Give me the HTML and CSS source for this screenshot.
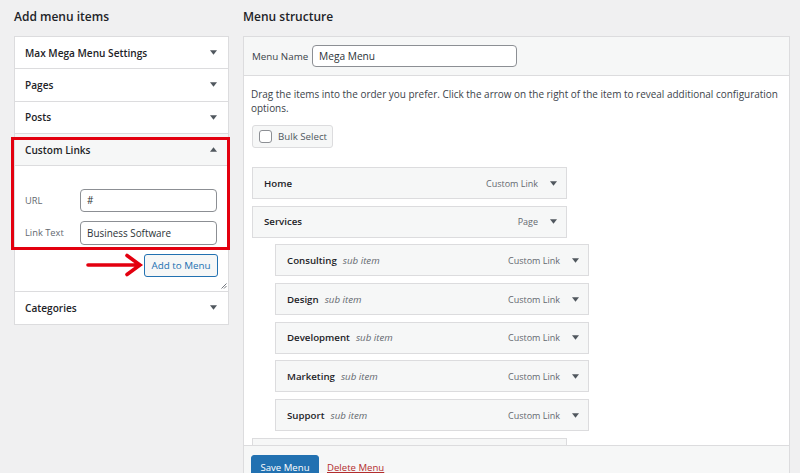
FILE: index.html
```html
<!DOCTYPE html>
<html lang="en">
<head>
<meta charset="utf-8">
<title>Menus</title>
<link rel="stylesheet" href="styles.css">
</head>
<body>
<div class="page">
  <div class="col-left">
    <h2 class="col-title">Add menu items</h2>
    <div class="accordion">
      <div class="acc-head"><span>Max Mega Menu Settings</span><svg class="tri" viewBox="0 0 8 5"><path d="M0 0H8L4 5Z"/></svg></div>
      <div class="acc-head"><span>Pages</span><svg class="tri" viewBox="0 0 8 5"><path d="M0 0H8L4 5Z"/></svg></div>
      <div class="acc-head"><span>Posts</span><svg class="tri" viewBox="0 0 8 5"><path d="M0 0H8L4 5Z"/></svg></div>
      <div class="acc-head open"><span>Custom Links</span><svg class="tri" viewBox="0 0 8 5"><path d="M0 5H8L4 0Z"/></svg></div>
      <div class="custom-body">
        <div class="field"><label class="field-label">URL</label><div class="input">#</div></div>
        <div class="field"><label class="field-label">Link Text</label><div class="input">Business Software</div></div>
        <div class="btn-row"><span class="btn-secondary">Add to Menu</span></div>
        <svg class="grip" viewBox="0 0 6 6"><path d="M5.5 0.5L0.5 5.5M5.5 3L3 5.5"/></svg>
      </div>
      <div class="acc-head last"><span>Categories</span><svg class="tri" viewBox="0 0 8 5"><path d="M0 0H8L4 5Z"/></svg></div>
    </div>
    <div class="highlight"></div>
    <svg class="red-arrow" viewBox="0 0 58 24"><path d="M2 12H54M41 2.5L54 12L41 21.5"/></svg>
  </div>

  <div class="col-right">
    <h2 class="col-title">Menu structure</h2>
    <div class="menu-panel">
      <div class="menu-header">
        <label class="menu-name-label">Menu Name</label>
        <div class="input menu-name">Mega Menu</div>
      </div>
      <div class="menu-body">
        <p class="desc">Drag the items into the order you prefer. Click the arrow on the right of the item to reveal additional configuration options.</p>
        <div class="bulk"><span class="checkbox"></span><span>Bulk Select</span></div>
        <div class="menu-list">
          <div class="item"><span class="item-title">Home</span><span class="item-type">Custom Link</span><svg class="tri" viewBox="0 0 8 5"><path d="M0 0H8L4 5Z"/></svg></div>
          <div class="item"><span class="item-title">Services</span><span class="item-type">Page</span><svg class="tri" viewBox="0 0 8 5"><path d="M0 0H8L4 5Z"/></svg></div>
          <div class="item sub"><span class="item-title">Consulting</span><span class="sub-note">sub item</span><span class="item-type">Custom Link</span><svg class="tri" viewBox="0 0 8 5"><path d="M0 0H8L4 5Z"/></svg></div>
          <div class="item sub"><span class="item-title">Design</span><span class="sub-note">sub item</span><span class="item-type">Custom Link</span><svg class="tri" viewBox="0 0 8 5"><path d="M0 0H8L4 5Z"/></svg></div>
          <div class="item sub"><span class="item-title">Development</span><span class="sub-note">sub item</span><span class="item-type">Custom Link</span><svg class="tri" viewBox="0 0 8 5"><path d="M0 0H8L4 5Z"/></svg></div>
          <div class="item sub"><span class="item-title">Marketing</span><span class="sub-note">sub item</span><span class="item-type">Custom Link</span><svg class="tri" viewBox="0 0 8 5"><path d="M0 0H8L4 5Z"/></svg></div>
          <div class="item sub"><span class="item-title">Support</span><span class="sub-note">sub item</span><span class="item-type">Custom Link</span><svg class="tri" viewBox="0 0 8 5"><path d="M0 0H8L4 5Z"/></svg></div>
          <div class="item"></div>
        </div>
      </div>
      <div class="menu-footer">
        <span class="btn-primary">Save Menu</span>
        <a class="delete-link" href="#">Delete Menu</a>
      </div>
    </div>
  </div>
</div>
</body>
</html>
```

FILE: styles.css
```css
* { box-sizing: border-box; }
html, body { margin: 0; height: 100%; }
body {
  background: #f0f0f1;
  font-family: "Open Sans", "Noto Sans", sans-serif;
  font-size: 10px;
  color: #1d2327;
  overflow: hidden;
}
.page {
  display: flex;
  align-items: flex-start;
  gap: 14px;
  padding-left: 14px;
}
.col-left { width: 215px; flex: none; position: relative; }
.col-right { width: 547px; flex: none; }
.col-title {
  margin: 7px 0 9px;
  font-size: 12px;
  line-height: 20px;
  font-weight: 600;
  color: #1d2327;
}

/* left accordion */
.accordion { background: #fff; border: 1px solid #dcdcde; }
.acc-head {
  height: 32.3px;
  display: flex;
  align-items: center;
  justify-content: space-between;
  padding: 0 11px 0 10px;
  border-bottom: 1px solid #dcdcde;
  font-weight: 600;
  font-size: 10.1px;
}
.acc-head.last { height: 32px; border-bottom: 0; }
.acc-head.open { background: #f6f7f7; }
.tri { width: 7px; height: 5px; fill: #50575e; flex: none; }
.custom-body {
  height: 125.8px;
  border-bottom: 1px solid #dcdcde;
  padding: 22.5px 11px 0 10px;
  display: flex;
  flex-direction: column;
}
.field { display: flex; align-items: center; margin-bottom: 9px; }
.field-label { width: 55px; flex: none; color: #646970; font-size: 9.3px; }
.input {
  flex: 1;
  height: 23.5px;
  border: 1px solid #8c8f94;
  border-radius: 4px;
  background: #fff;
  padding: 0 6px;
  display: flex;
  align-items: center;
  font-size: 9.9px;
  color: #2c3338;
}
.btn-row { display: flex; justify-content: flex-end; margin-right: -1px; }
.btn-secondary {
  width: 74px;
  height: 23px;
  display: flex;
  align-items: center;
  justify-content: center;
  border: 1px solid #2271b1;
  border-radius: 3px;
  background: #f6f7f7;
  color: #2271b1;
  font-size: 9.8px;
}
.grip {
  width: 6px; height: 6px;
  margin-top: auto;
  margin-bottom: 2px;
  margin-right: -10px;
  align-self: flex-end;
  stroke: #646970;
  stroke-width: 0.9;
  fill: none;
}

/* overlays */
.highlight {
  position: absolute;
  left: -3px;
  top: 137px;
  width: 219px;
  height: 113px;
  border: 3px solid #e3000f;
}
.red-arrow {
  position: absolute;
  left: 72px;
  top: 253px;
  width: 58px;
  height: 24px;
  fill: none;
  stroke: #e3000f;
  stroke-width: 3.6;
  stroke-linecap: round;
}

/* right panel */
.menu-panel { background: #fff; border: 1px solid #dcdcde; }
.menu-header {
  height: 39px;
  display: flex;
  align-items: center;
  padding: 0 8px;
  background: #f6f7f7;
  border-bottom: 1px solid #dcdcde;
}
.menu-name-label { width: 60px; flex: none; color: #3c434a; font-size: 9.8px; }
.input.menu-name {
  flex: none;
  width: 205px;
  height: 22px;
  font-size: 10.2px;
  padding: 0 6px;
}
.menu-body {
  height: 369px;
  overflow: hidden;
  padding: 11px 4px 0 7px;
}
.desc { margin: 0; line-height: 14px; color: #3c434a; font-size: 9.96px; }
.bulk {
  display: inline-flex;
  align-items: center;
  gap: 6px;
  margin: 10px 0 0 1px;
  width: 81px;
  height: 23px;
  padding-left: 6px;
  border: 1px solid #dcdcde;
  border-radius: 3px;
  background: #f6f7f7;
  color: #50575e;
  font-size: 9.7px;
}
.checkbox {
  width: 13px; height: 13px;
  border: 1px solid #8c8f94;
  border-radius: 3px;
  background: #fff;
}
.menu-list { margin-top: 19px; padding-left: 1px; }
.item {
  width: 315px;
  height: 32px;
  display: flex;
  align-items: center;
  margin-bottom: 6.7px;
  padding: 0 9px 0 11px;
  border: 1px solid #dcdcde;
  background: #f6f7f7;
}
.item.sub { width: 314px; margin-left: 23px; }
.item-title { font-weight: 600; color: #1d2327; font-size: 9.7px; }
.sub-note { margin-left: 6px; font-style: italic; color: #646970; font-size: 9.7px; }
.item-type { margin-left: auto; margin-right: 12px; color: #646970; font-size: 9px; }

.menu-footer {
  display: flex;
  align-items: center;
  gap: 8px;
  padding: 9px 7px 20px;
  background: #f6f7f7;
  border-top: 1px solid #dcdcde;
}
.btn-primary {
  width: 68px;
  height: 25px;
  display: flex;
  align-items: center;
  justify-content: center;
  background: #2271b1;
  border: 1px solid #2271b1;
  border-radius: 3px;
  color: #fff;
  font-size: 9.6px;
}
.delete-link { color: #b32d2e; text-decoration: underline; font-size: 9.6px; }
```
